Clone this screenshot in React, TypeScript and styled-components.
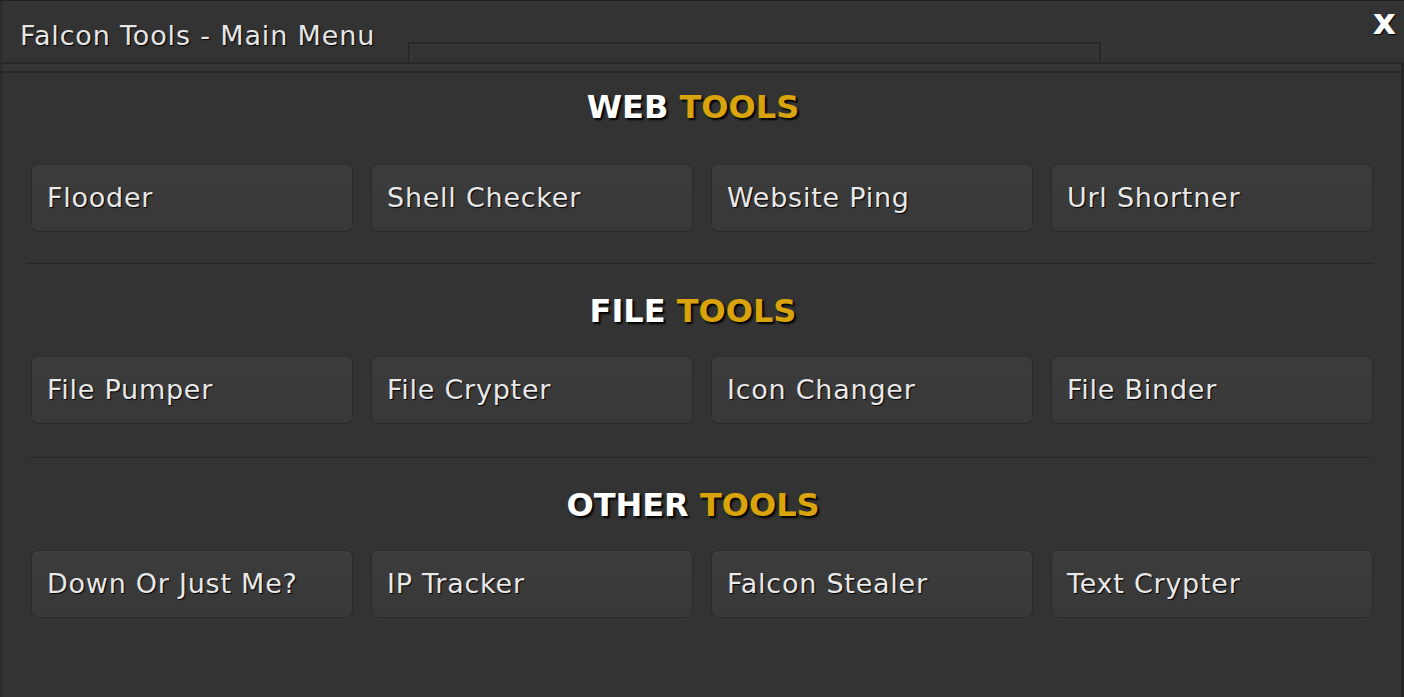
import styled, { createGlobalStyle } from 'styled-components';

const GlobalStyle = createGlobalStyle`
 html, body {
  margin: 0;
  padding: 0;
  background: #333333;
 }
 body {
  font-family: 'DejaVu Sans', 'Liberation Sans', sans-serif;
 }
`;

const Window = styled.div`
 box-sizing: border-box;
 width: 1404px;
 height: 697px;
 overflow: hidden;
 background: #333333;
 border-top: 1px solid #1f1f1f;
 border-left: 2px solid #2a2a2a;
 display: flex;
 flex-direction: column;
`;

const TitleBar = styled.div`
 display: grid;
 grid-template-columns: 406px 693px 1fr;
 height: 61px;
 border-bottom: 2px solid #272727;
 & .title {
  align-self: start;
  padding: 19px 0 0 18px;
  font-size: 27px;
  letter-spacing: 0.85px;
  color: #e6e6e6;
  text-shadow: 1px 1px 1px #000;
  white-space: nowrap;
 }
 & .close {
  justify-self: end;
  align-self: start;
  margin-top: 1px;
  padding-right: 8px;
  font-size: 36px;
  line-height: 40px;
  font-weight: bold;
  color: #ffffff;
  text-shadow: 1px 1px 1px #000;
 }
`;

const Tab = styled.div`
 align-self: end;
 height: 18px;
 border: 2px solid #282828;
 border-bottom: none;
 box-shadow: inset 1px 1px 0 #3a3a3a;
`;

const Band = styled.div`
 height: 7px;
 background: #353535;
 border-bottom: 2px solid #272727;
 border-right: 3px solid #262626;
`;

const Content = styled.div`
 flex: 1;
 padding: 0 28px 0 29px;
 border-right: 3px solid #262626;
`;

const Heading = styled.h2<{ $top: number; $bottom: number }>`
 margin: ${(p) => p.$top}px 0 ${(p) => p.$bottom}px;
 padding-right: 18px;
 height: 40px;
 line-height: 40px;
 text-align: center;
 font-size: 32px;
 font-weight: bold;
 color: #ffffff;
 text-shadow: 2px 2px 2px #000;
 & span {
  color: #d9a30b;
 }
`;

const ButtonGrid = styled.div`
 display: grid;
 grid-template-columns: repeat(4, 1fr);
 gap: 18px;
`;

const ToolButton = styled.div`
 box-sizing: border-box;
 height: 68px;
 display: flex;
 align-items: center;
 padding: 0 0 2px 15px;
 border: 1px solid #2a2a2a;
 border-radius: 7px;
 background: linear-gradient(#3c3c3c, #383838);
 box-shadow: inset 0 1px 0 #424242;
 font-size: 27px;
 letter-spacing: 0.75px;
 color: #e8e8e8;
 text-shadow: 1px 1px 1px #000;
 white-space: nowrap;
`;

const Divider = styled.hr<{ $top: number }>`
 margin: ${(p) => p.$top}px 0 0 -4px;
 border: none;
 border-top: 1px solid #262626;
 border-bottom: 1px solid #383838;
 width: calc(100% + 4px);
`;

const sections = [
 { title: 'WEB', top: 14, bottom: 37, after: 31, tools: ['Flooder', 'Shell Checker', 'Website Ping', 'Url Shortner'] },
 { title: 'FILE', top: 26, bottom: 25, after: 33, tools: ['File Pumper', 'File Crypter', 'Icon Changer', 'File Binder'] },
 { title: 'OTHER', top: 26, bottom: 25, after: 0, tools: ['Down Or Just Me?', 'IP Tracker', 'Falcon Stealer', 'Text Crypter'] },
];

export default function App() {
 return (
  <>
   <GlobalStyle />
   <Window>
    <TitleBar>
     <div className='title'>Falcon Tools - Main Menu</div>
     <Tab />
     <div className='close'>x</div>
    </TitleBar>
    <Band />
    <Content>
     {sections.map((s) => (
      <div key={s.title}>
       <Heading $top={s.top} $bottom={s.bottom}>
        {s.title} <span>TOOLS</span>
       </Heading>
       <ButtonGrid>
        {s.tools.map((t) => (
         <ToolButton key={t}>{t}</ToolButton>
        ))}
       </ButtonGrid>
       {s.after > 0 && <Divider $top={s.after} />}
      </div>
     ))}
    </Content>
   </Window>
  </>
 );
}
